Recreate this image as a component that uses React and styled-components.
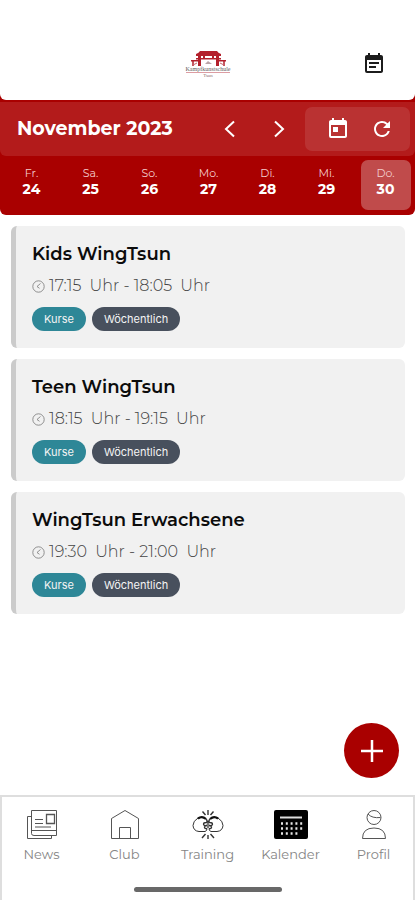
import React, {useState} from "react";
import styled, {createGlobalStyle} from "styled-components";
import {MdEventNote, MdToday, MdRefresh} from "react-icons/md";

const GlobalStyle = createGlobalStyle`
  * {
    box-sizing: border-box;
  }

  body {
    margin: 0;
    background: #fff;
    font-family: Montserrat, Inter, "Liberation Sans", sans-serif;
  }

  button {
    display: flex;
    align-items: center;
    justify-content: center;
    padding: 0;
    border: none;
    background: none;
    color: inherit;
    font-family: inherit;
    cursor: pointer;
  }
`;

const StylePage = styled.div`
  display: flex;
  flex-direction: column;
  min-height: 100vh;
`;

const StyleTop = styled.div`
  background: #a90000;
  border-radius: 0 0 6px 6px;
`;

const StyleAppbar = styled.header`
  display: grid;
  grid-template-columns: 1fr auto 1fr;
  align-items: center;
  height: 100px;
  padding: 28px 29px 0 29px;
  background: #fff;
  border-radius: 0 0 6px 6px;

  .logo {
    grid-column: 2;
  }

  .note {
    justify-self: end;
    font-size: 24px;
    color: #1c1c1c;
  }
`;

const StyleMonthBar = styled.div`
  display: flex;
  align-items: center;
  height: 54px;
  margin-top: 2px;
  padding: 0 5px 0 17px;
  background: #b31b1b;
  border-radius: 0 0 6px 6px;
  color: #fff;

  h1 {
    flex: 1;
    margin: 0;
    font-size: 19px;
    line-height: 24px;
    font-weight: 700;
  }
`;

const StyleArrows = styled.div`
  display: flex;
  margin-right: 2px;

  button {
    width: 49px;
    height: 44px;
  }
`;

const StyleTools = styled.div`
  display: flex;
  align-items: center;
  justify-content: center;
  gap: 20px;
  width: 105px;
  height: 44px;
  padding-left: 5px;
  border-radius: 7px;
  background: rgba(255, 255, 255, 0.1);

  button {
    font-size: 24px;
  }
`;

const StyleWeek = styled.div`
  display: flex;
  padding: 4px 0 5px 2px;
`;

const StyleDay = styled.button`
  && {
    flex: 1;
    color: #fff;
  }

  .box {
    width: 50px;
    height: 50px;
    padding: 5px 0;
    border-radius: 7px;
    background: ${({$active}) => ($active ? "#c04b4b" : "transparent")};
  }

  .name {
    font-size: 11px;
    line-height: 16px;
    color: #f3cccc;
  }

  .number {
    font-size: 14px;
    line-height: 16px;
    font-weight: 700;
  }
`;

const StyleMain = styled.main`
  position: relative;
  flex: 1;
  padding: 11px 10px 90px 11px;
`;

const StyleList = styled.ul`
  display: flex;
  flex-direction: column;
  gap: 11px;
  margin: 0;
  padding: 0;
  list-style: none;
`;

const StyleCourse = styled.li`
  padding: 16px 16px 17px 16px;
  border-left: 5px solid #cbcbcb;
  border-radius: 6px;
  background: #f1f1f1;

  h2 {
    margin: 0 0 8px 0;
    font-size: 18px;
    line-height: 24px;
    font-weight: 600;
    color: #0c0c0c;
  }

  .time {
    display: flex;
    align-items: center;
    gap: 4px;
    margin-bottom: 9px;
    font-size: 16px;
    line-height: 24px;
    font-weight: 300;
    color: #444;
    white-space: pre;
  }

  .tags {
    display: flex;
    gap: 6px;
  }
`;

const StyleTag = styled.span`
  padding: 0 12px;
  border-radius: 12px;
  background: ${({$color}) => $color};
  color: #f4f4f4;
  font-family: Inter, "Liberation Sans", sans-serif;
  font-size: 11px;
  line-height: 24px;
  font-weight: 400;
`;

// floats over the list
const StyleAdd = styled.button`
  && {
    position: absolute;
    right: 16px;
    bottom: 17px;
    width: 55px;
    height: 55px;
    border-radius: 50%;
    background: #a90000;
    color: #fff;
  }
`;

const StyleFooter = styled.footer`
  height: 105px;
  border: 2px solid #dedede;
  border-bottom: none;

  nav {
    display: flex;
    height: 90px;
    margin: 0 -2px;
    padding-top: 12px;
  }

  .indicator {
    width: 148px;
    height: 5px;
    margin: 0 auto;
    border-radius: 3px;
    background: #686868;
  }
`;

const StyleTab = styled.a`
  display: flex;
  flex: 1;
  flex-direction: column;
  align-items: center;
  gap: 3px;
  font-size: 13px;
  line-height: 20px;
  font-weight: 400;
  color: #858585;
  text-decoration: none;

  svg {
    color: #555;
  }
`;

const days = [
    {name: "Fr.", number: 24},
    {name: "Sa.", number: 25},
    {name: "So.", number: 26},
    {name: "Mo.", number: 27},
    {name: "Di.", number: 28},
    {name: "Mi.", number: 29},
    {name: "Do.", number: 30},
];

const courses = [
    {title: "Kids WingTsun", from: "17:15", to: "18:05"},
    {title: "Teen WingTsun", from: "18:15", to: "19:15"},
    {title: "WingTsun Erwachsene", from: "19:30", to: "21:00"},
];

function Logo() {
    return <svg className={"logo"} width="46" height="28" viewBox="0 0 46 28" role="img" aria-label="Kampfkunstschule">
        <g fill="#b3202c">
            <path d="M11 4q3-1 4-3h17q1 2 4 3v2H11z"/>
            <path d="M13 6h3v10h-3zM31 6h3v10h-3zM18 6h2v3h-2zM27 6h2v3h-2z"/>
            <path d="M11 8h25v1.500H11zM6 10h10v1.500H6zM31 10h10v1.500H31z"/>
        </g>
        <path d="M8 11v5M39 11v5" stroke="#b3202c" strokeWidth="1.500"/>
        <path d="M8 15l4-2M35 13l4 2" stroke="#c9646c"/>
        <path d="M20 14l3-3 4 3z" fill="#b9a5a8"/>
        <text x="23" y="21" textAnchor="middle" fontFamily="Liberation Serif, serif" fontSize="6" fill="#625c5c">Kampfkunstschule</text>
        <path d="M1 22.500h44" stroke="#dc9da3"/>
        <text x="23" y="27" textAnchor="middle" fontFamily="Liberation Serif, serif" fontSize="5" fill="#8d6b6e">Tsun</text>
    </svg>
}

function Chevron({left}) {
    return <svg width="12" height="18" viewBox="0 0 12 18" fill="none" stroke="currentColor" strokeWidth="2">
        <path d={left ? "M10 1.500L2 9l8 7.500" : "M2 1.500L10 9l-8 7.500"}/>
    </svg>
}

function ClockIcon() {
    return <svg width="13" height="13" viewBox="0 0 13 13" fill="none" stroke="#777" strokeWidth=".8">
        <circle cx="6.500" cy="6.500" r="5.700"/>
        <path d="M8.500 3.500L5 6.500l2.500 1.800"/>
    </svg>
}

function NewsIcon() {
    return <svg width="32" height="32" viewBox="0 0 32 32" fill="none" stroke="currentColor">
        <path d="M5.500 24.500V1.500h25v25H8q-2.500 0-2.500-2z"/>
        <path d="M5.500 7.500h-4v22h24v-3M5.500 21.500h25"/>
        <path d="M20.500 5.500h8v9h-8z" strokeWidth="1.300"/>
        <path d="M9 10.500h8M9 14.500h8M9 18h16" strokeWidth="1.200"/>
    </svg>
}

function ClubIcon() {
    return <svg width="32" height="32" viewBox="0 0 32 32" fill="none" stroke="currentColor">
        <path d="M2.500 29.500v-20L16 1.500l13.500 8v20zM10.500 29.500v-11h11v11"/>
    </svg>
}

function TrainingIcon() {
    return <svg width="32" height="32" viewBox="0 0 32 32" fill="none" stroke="#333">
        <path d="M13.500 9.500Q10 7 6 9q-5 3-5 7.500Q1.500 22 7 22.500h6q2-.5 2-3"/>
        <path d="M18.500 9.500Q22 7 26 9q5 3 5 7.500-.5 5.500-6 6h-6q-2-.5-2-3"/>
        <path d="M6 9.500q4-3 8 .5M26 9.500q-4-3-8 .5" stroke="#111" strokeWidth="2.200"/>
        <path d="M14 10q2 2 .5 3.500-3 0-3 1.700t3.500 1.300q-3 .5-2.500 2t2.500 1M18 10q-2 2-.5 3.500 3 0 3 1.700T17 16.500q3 .5 2.500 2t-2.500 1M16 12v7" strokeWidth="1.300"/>
        <path d="M10.500 2.500l3 3.500M16 1v5M21.500 2.500l-3 3.500M10 29l3.500-4M16 26v4M22 29l-3.500-4" strokeWidth="1.400"/>
    </svg>
}

function KalenderIcon() {
    return <svg width="34" height="32" viewBox="0 0 34 32">
        <rect y="1" width="34" height="29" rx="2" fill="#000"/>
        <path d="M6 8.500h22" stroke="#ddd" strokeWidth="2"/>
        <path d="M7 14.500h22M7 19.500h22M7 24.500h17" stroke="#e6e6e6" strokeWidth="2.500" strokeDasharray="2 2.800"/>
    </svg>
}

function ProfilIcon() {
    return <svg width="32" height="32" viewBox="0 0 32 32" fill="none" stroke="currentColor">
        <circle cx="16" cy="8.500" r="7"/>
        <path d="M10 5q4 4.500 12.500 3.500M4.500 29.500q0-10.500 11.500-10.500t11.500 10.500z"/>
    </svg>
}

function Course({title, from, to}) {
    return <StyleCourse>
        <h2>{title}</h2>
        <div className={"time"}>
            <ClockIcon/>
            <span>{`${from}  Uhr - ${to}  Uhr`}</span>
        </div>
        <div className={"tags"}>
            <StyleTag $color={"#2e8797"}>Kurse</StyleTag>
            <StyleTag $color={"#48505d"}>Wöchentlich</StyleTag>
        </div>
    </StyleCourse>
}

const tabs = [
    {label: "News", Icon: NewsIcon},
    {label: "Club", Icon: ClubIcon},
    {label: "Training", Icon: TrainingIcon},
    {label: "Kalender", Icon: KalenderIcon},
    {label: "Profil", Icon: ProfilIcon},
];

function App() {
    const [active, setActive] = useState(30);
    return (
        <StylePage>
            <GlobalStyle/>
            <StyleTop>
                <StyleAppbar>
                    <Logo/>
                    <button className={"note"} aria-label="Termine"><MdEventNote/></button>
                </StyleAppbar>
                <StyleMonthBar>
                    <h1>November 2023</h1>
                    <StyleArrows>
                        <button aria-label="Zurück"><Chevron left/></button>
                        <button aria-label="Weiter"><Chevron/></button>
                    </StyleArrows>
                    <StyleTools>
                        <button aria-label="Heute"><MdToday/></button>
                        <button aria-label="Aktualisieren"><MdRefresh/></button>
                    </StyleTools>
                </StyleMonthBar>
                <StyleWeek>
                    {days.map(({name, number}) => (
                        <StyleDay key={number} $active={active === number} onClick={() => setActive(number)}>
                            <div className={"box"}>
                                <div className={"name"}>{name}</div>
                                <div className={"number"}>{number}</div>
                            </div>
                        </StyleDay>
                    ))}
                </StyleWeek>
            </StyleTop>
            <StyleMain>
                <StyleList>
                    {courses.map((course) => <Course key={course.title} {...course}/>)}
                </StyleList>
                <StyleAdd aria-label="Neuer Termin">
                    <svg width="22" height="22" viewBox="0 0 22 22" stroke="currentColor" strokeWidth="2.500">
                        <path d="M11 0v22M0 11h22"/>
                    </svg>
                </StyleAdd>
            </StyleMain>
            <StyleFooter>
                <nav>
                    {tabs.map(({label, Icon}) => (
                        <StyleTab key={label} href={`#${label.toLowerCase()}`}>
                            <Icon/>
                            {label}
                        </StyleTab>
                    ))}
                </nav>
                <div className={"indicator"}/>
            </StyleFooter>
        </StylePage>
    );
}

export default App;
